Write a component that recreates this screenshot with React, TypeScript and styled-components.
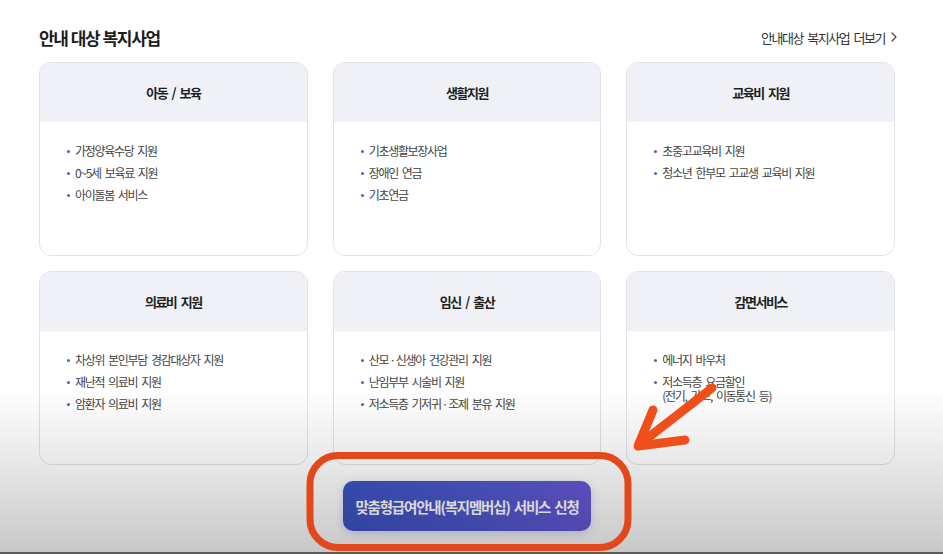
import React from "react";
import styled, { createGlobalStyle } from "styled-components";

const Global = createGlobalStyle`
  html, body { margin: 0; padding: 0; background: #ffffff; }
  body {
    font-family: "Noto Sans CJK KR", "Noto Sans", sans-serif;
    color: #222;
    width: 943px;
    height: 554px;
    overflow: hidden;
  }
  * { box-sizing: border-box; }
`;

const Page = styled.div`
  position: relative;
  width: 943px;
  height: 554px;
  padding: 25px 48px 0 39px;
`;

const TitleRow = styled.div`
  display: flex;
  align-items: center;
  justify-content: space-between;
  height: 24px;
  margin-bottom: 13px;
`;

const Title = styled.h2`
  margin: 0;
  font-size: 17px;
  font-weight: 700;
  letter-spacing: -1.3px;
  word-spacing: 0.5px;
  color: #1d1d1d;
`;

const MoreLink = styled.a`
  display: flex;
  align-items: center;
  gap: 6px;
  font-size: 13px;
  letter-spacing: -1.5px;
  word-spacing: 3px;
  color: #333;
  text-decoration: none;
  margin-right: -2px;
`;

const Grid = styled.div`
  display: grid;
  grid-template-columns: repeat(3, 1fr);
  column-gap: 25px;
  row-gap: 15px;
`;

const Card = styled.div`
  height: 194px;
  border: 1px solid #e2e3e9;
  border-radius: 12px;
  overflow: hidden;
  background: #fff;
`;

const CardHeader = styled.div`
  height: 59px;
  background: #eff1f7;
  display: flex;
  align-items: center;
  justify-content: center;
  font-size: 13px;
  font-weight: 700;
  letter-spacing: -1.5px;
  word-spacing: 3px;
  color: #1f1f1f;
  padding-bottom: 1px;
`;

const List = styled.ul`
  list-style: none;
  margin: 0;
  padding: 22px 20px 0 27px;
  display: flex;
  flex-direction: column;
  gap: 8px;
`;

const Item = styled.li`
  display: flex;
  align-items: flex-start;
  gap: 5px;
  font-size: 12px;
  line-height: 14px;
  letter-spacing: -1.3px;
  word-spacing: 2.5px;
  color: #444;
`;

const Dot = styled.span`
  flex: none;
  width: 3px;
  height: 3px;
  border-radius: 50%;
  background: #5a60bd;
  margin-top: 6px;
`;

const ButtonRow = styled.div`
  display: flex;
  justify-content: center;
  margin-top: 16px;
`;

const ApplyButton = styled.button`
  width: 248px;
  height: 50px;
  border: none;
  border-radius: 10px;
  background: linear-gradient(90deg, #3c53c3 0%, #4e58cc 55%, #6658d5 100%);
  box-shadow: 0 2px 8px rgba(70, 80, 190, 0.25);
  color: #fff;
  font-family: inherit;
  font-size: 14.5px;
  font-weight: 700;
  letter-spacing: -1.2px;
  word-spacing: 2px;
  padding: 0;
  cursor: pointer;
`;

const Shade = styled.div`
  position: absolute;
  inset: 0;
  pointer-events: none;
  background: linear-gradient(
    to bottom,
    rgba(0, 0, 0, 0) 0%,
    rgba(0, 0, 0, 0) 70%,
    rgba(0, 0, 0, 0.1) 85%,
    rgba(0, 0, 0, 0.22) 100%
  );
`;

const BottomEdge = styled.div`
  position: absolute;
  left: 0;
  right: 0;
  bottom: 0;
  height: 2px;
  background: #5a5a5a;
  pointer-events: none;
`;

const Annotation = styled.svg`
  position: absolute;
  inset: 0;
  pointer-events: none;
`;

type Category = { title: string; items: string[][] };

const categories: Category[] = [
  { title: "아동 / 보육", items: [["가정양육수당 지원"], ["0~5세 보육료 지원"], ["아이돌봄 서비스"]] },
  { title: "생활지원", items: [["기초생활보장사업"], ["장애인 연금"], ["기초연금"]] },
  { title: "교육비 지원", items: [["초중고교육비 지원"], ["청소년 한부모 고교생 교육비 지원"]] },
  { title: "의료비 지원", items: [["차상위 본인부담 경감대상자 지원"], ["재난적 의료비 지원"], ["암환자 의료비 지원"]] },
  {
    title: "임신 / 출산",
    items: [["산모\u2009·\u2009신생아 건강관리 지원"], ["난임부부 시술비 지원"], ["저소득층 기저귀\u2009·\u2009조제 분유 지원"]],
  },
  { title: "감면서비스", items: [["에너지 바우처"], ["저소득층 요금할인", "(전기, 가스, 이동통신 등)"]] },
];

export default function App() {
  return (
    <>
      <Global />
      <Page>
        <TitleRow>
          <Title>안내 대상 복지사업</Title>
          <MoreLink href="#">
            안내대상 복지사업 더보기
            <svg width="6" height="10" viewBox="0 0 6 10" fill="none">
              <path d="M1 1l4 4-4 4" stroke="#444" strokeWidth="1.2" strokeLinecap="round" strokeLinejoin="round" />
            </svg>
          </MoreLink>
        </TitleRow>
        <Grid>
          {categories.map((c) => (
            <Card key={c.title}>
              <CardHeader>{c.title}</CardHeader>
              <List>
                {c.items.map((lines) => (
                  <Item key={lines[0]}>
                    <Dot />
                    <span>
                      {lines.map((l, i) => (
                        <React.Fragment key={l}>
                          {i > 0 && <br />}
                          {l}
                        </React.Fragment>
                      ))}
                    </span>
                  </Item>
                ))}
              </List>
            </Card>
          ))}
        </Grid>
        <ButtonRow>
          <ApplyButton>맞춤형급여안내(복지멤버십) 서비스 신청</ApplyButton>
        </ButtonRow>
        <Shade />
        <BottomEdge />
        <Annotation width="943" height="554" viewBox="0 0 943 554">
          <rect x="310" y="455.5" width="318" height="92" rx="28" fill="none" stroke="#e2481a" strokeWidth="7" />
          <g stroke="#f04f1c" strokeWidth="9" strokeLinecap="round" strokeLinejoin="round" fill="none">
            <path d="M712 388 L640 444" />
            <path d="M653 410 L638 446 L685 440" />
          </g>
        </Annotation>
      </Page>
    </>
  );
}
